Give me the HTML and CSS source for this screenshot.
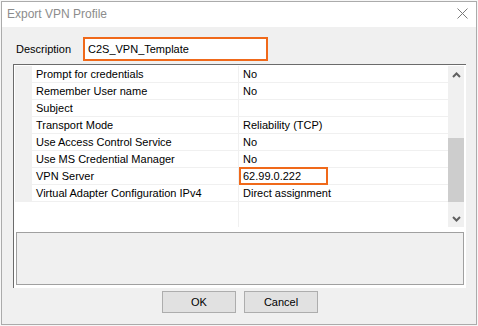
FILE: index.html
```html
<!DOCTYPE html>
<html>
<head>
<meta charset="utf-8">
<link rel="stylesheet" href="styles.css">
</head>
<body>
<div class="window">
  <div class="titlebar">
    <span class="title">Export VPN Profile</span>
    <svg class="close" width="11" height="11" viewBox="0 0 11 11"><path d="M0.5 0.5 L10.5 10.5 M10.5 0.5 L0.5 10.5" stroke="#7a7a7a" stroke-width="1" fill="none"/></svg>
  </div>
  <div class="content">
    <div class="desc-row">
      <span class="label">Description</span>
      <div class="textbox">C2S_VPN_Template</div>
    </div>
    <div class="grid">
      <div class="list">
        <div class="rows">
          <div class="row"><div class="gut"></div><div class="name">Prompt for credentials</div><div class="val">No</div></div>
          <div class="row"><div class="gut"></div><div class="name">Remember User name</div><div class="val">No</div></div>
          <div class="row"><div class="gut"></div><div class="name">Subject</div><div class="val"></div></div>
          <div class="row"><div class="gut"></div><div class="name">Transport Mode</div><div class="val">Reliability (TCP)</div></div>
          <div class="row"><div class="gut"></div><div class="name">Use Access Control Service</div><div class="val">No</div></div>
          <div class="row"><div class="gut"></div><div class="name">Use MS Credential Manager</div><div class="val">No</div></div>
          <div class="row"><div class="gut"></div><div class="name">VPN Server</div><div class="val hl-cell"><span class="hl"></span>62.99.0.222</div></div>
          <div class="row"><div class="gut"></div><div class="name">Virtual Adapter Configuration IPv4</div><div class="val">Direct assignment</div></div>
          <div class="row filler"><div class="gut"></div><div class="name"></div><div class="val"></div></div>
        </div>
        <div class="scrollbar">
          <div class="arrow">
            <svg width="9" height="6" viewBox="0 0 9 6"><path d="M1 5 L4.5 1.5 L8 5" stroke="#606060" stroke-width="2" fill="none"/></svg>
          </div>
          <div class="track"><div class="thumb"></div></div>
          <div class="arrow">
            <svg width="9" height="6" viewBox="0 0 9 6"><path d="M1 1 L4.5 4.5 L8 1" stroke="#606060" stroke-width="2" fill="none"/></svg>
          </div>
        </div>
      </div>
      <div class="help"></div>
    </div>
    <div class="buttons">
      <div class="btn">OK</div>
      <div class="btn">Cancel</div>
    </div>
  </div>
</div>
</body>
</html>
```
FILE: styles.css
```css
html, body {
  margin: 0;
  padding: 0;
}
body {
  background: #f7f7f7;
  width: 478px;
  height: 326px;
  overflow: hidden;
  font-family: "Liberation Sans", Arial, sans-serif;
  font-size: 11px;
  color: #000;
}
.window {
  box-sizing: border-box;
  margin: 1px;
  width: 476px;
  height: 324px;
  border: 1px solid #ababab;
  background: #f0f0f0;
  display: flex;
  flex-direction: column;
}
.titlebar {
  height: 25px;
  background: #fff;
  display: flex;
  align-items: center;
  justify-content: space-between;
  padding: 0 8px 0 5px;
}
.title {
  font-size: 12px;
  color: #8c8c8c;
  position: relative;
  top: -1px;
}
.close {
  position: relative;
  top: -1px;
}
.content {
  display: flex;
  flex-direction: column;
  padding: 10px 9px 0 11px;
}
.desc-row {
  display: flex;
  align-items: center;
  height: 24px;
}
.label {
  width: 70px;
  flex: none;
  box-sizing: border-box;
  padding-left: 3px;
}
.textbox {
  box-sizing: border-box;
  width: 185px;
  height: 24px;
  border: 2px solid #f0691a;
  background: #fff;
  padding-left: 3px;
  line-height: 20px;
}
.grid {
  box-sizing: border-box;
  margin-top: 3px;
  width: 453px;
  height: 224px;
  border-top: 1px solid #6b6b6b;
  border-left: 1px solid #6b6b6b;
  background: #fff;
  padding: 1px 2px 3px 1px;
  display: flex;
  flex-direction: column;
}
.list {
  display: flex;
  height: 161px;
}
.rows {
  flex: 1;
  display: flex;
  flex-direction: column;
}
.row {
  display: flex;
  height: 17px;
  line-height: 16px;
  box-sizing: border-box;
  border-bottom: 1px solid #f0f0f0;
}
.row.filler {
  flex: 1;
  border-bottom: none;
}
.gut {
  width: 17px;
  background: #f0f0f0;
}
.filler .gut {
  background: #fff;
}
.name {
  width: 207px;
  padding-left: 4px;
  box-sizing: border-box;
  border-right: 1px solid #f0f0f0;
  white-space: nowrap;
}
.val {
  flex: 1;
  padding-left: 4px;
  white-space: nowrap;
}
.hl-cell {
  position: relative;
}
.hl {
  position: absolute;
  left: 0;
  top: -1px;
  width: 89px;
  height: 18px;
  box-sizing: border-box;
  border: 2px solid #f0691a;
}
.scrollbar {
  width: 16px;
  background: #f0f0f0;
  display: flex;
  flex-direction: column;
}
.arrow {
  height: 17px;
  display: flex;
  align-items: center;
  justify-content: center;
}
.track {
  flex: 1;
  display: flex;
  flex-direction: column;
  justify-content: flex-end;
  padding-bottom: 8px;
}
.thumb {
  height: 64px;
  background: #cdcdcd;
}
.help {
  box-sizing: border-box;
  margin: 5px 0 0 1px;
  height: 53px;
  border: 1px solid #a0a0a0;
  background: #f0f0f0;
}
.buttons {
  display: flex;
  justify-content: center;
  gap: 8px;
  margin-top: 3px;
}
.btn {
  box-sizing: border-box;
  width: 74px;
  height: 22px;
  border: 1px solid #adadad;
  background: #e1e1e1;
  display: flex;
  align-items: center;
  justify-content: center;
}
```
